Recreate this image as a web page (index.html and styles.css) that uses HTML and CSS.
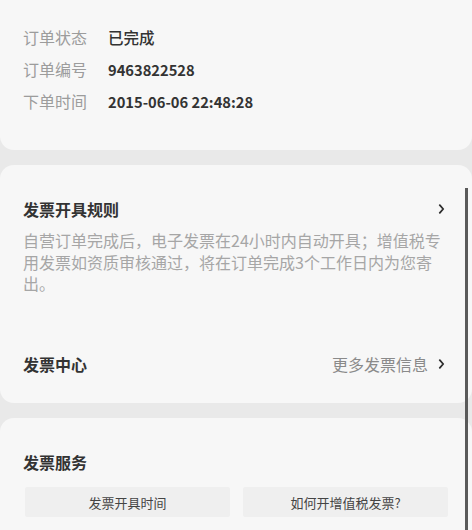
FILE: index.html
```html
<!DOCTYPE html>
<html lang="zh-CN">
<head>
<meta charset="utf-8">
<link rel="stylesheet" href="styles.css">
</head>
<body>
<div class="page">
  <section class="card card-first">
    <div class="info-row"><span class="label">订单状态</span><span class="value value-status">已完成</span></div>
    <div class="info-row"><span class="label">订单编号</span><span class="value">9463822528</span></div>
    <div class="info-row"><span class="label">下单时间</span><span class="value">2015-06-06 22:48:28</span></div>
  </section>

  <section class="card card-rules">
    <div class="title-row">
      <span class="title">发票开具规则</span>
      <svg class="chev" width="7" height="10" viewBox="0 0 7 10"><path d="M1.8 1.2 L5.2 5 L1.8 8.8" fill="none" stroke="#2e2e2e" stroke-width="1.8" stroke-linecap="round" stroke-linejoin="round"/></svg>
    </div>
    <p class="desc">自营订单完成后，电子发票在24小时内自动开具；增值税专用发票如资质审核通过，将在订单完成3个工作日内为您寄出。</p>
    <div class="title-row center-row">
      <span class="title title-normal">发票中心</span>
      <span class="more">更多发票信息
        <svg class="chev" width="7" height="10" viewBox="0 0 7 10"><path d="M1.8 1.2 L5.2 5 L1.8 8.8" fill="none" stroke="#2e2e2e" stroke-width="1.8" stroke-linecap="round" stroke-linejoin="round"/></svg>
      </span>
    </div>
  </section>

  <section class="card card-service">
    <div class="title-row">
      <span class="title title-normal">发票服务</span>
    </div>
    <div class="btns">
      <div class="btn">发票开具时间</div>
      <div class="btn">如何开增值税发票?</div>
    </div>
  </section>
</div>
<div class="scrollbar"></div>
</body>
</html>
```

FILE: styles.css
```css
html, body {
  margin: 0;
  padding: 0;
  background: #e9e9e9;
  font-family: "Noto Sans CJK SC", "Noto Sans", sans-serif;
  color: #333;
  overflow: hidden;
}
.page {
  display: flex;
  flex-direction: column;
  gap: 15px;
  height: 530px;
}
.card {
  background: #f7f7f7;
  border-radius: 14px;
  padding: 0 27px 0 23px;
  flex-shrink: 0;
}
.card-first {
  border-radius: 0 0 14px 14px;
  padding-top: 21px;
  padding-bottom: 33px;
  height: 96px;
}
.info-row {
  display: flex;
  align-items: center;
  height: 32px;
  font-size: 16px;
}
.label {
  width: 85px;
  color: #9c9c9c;
}
.value {
  color: #333;
  font-weight: 700;
  font-size: 14.7px;
}
.value-status {
  font-weight: 500;
  font-size: 15.5px;
}
.card-rules {
  padding-top: 32px;
  padding-bottom: 27px;
  height: 179px;
}
.title-row {
  display: flex;
  align-items: center;
  justify-content: space-between;
  height: 24px;
}
.title {
  font-size: 16px;
  font-weight: 700;
  color: #333;
}
.title-normal {
  font-weight: 600;
}
.chev {
  display: block;
}
.desc {
  margin: 9px 0 0 0;
  font-size: 16px;
  line-height: 21.5px;
  color: #a6a6a6;
}
.center-row {
  margin-top: 57px;
}
.more {
  display: flex;
  align-items: center;
  gap: 10px;
  font-size: 16px;
  color: #8a8a8a;
}
.card-service {
  padding: 32px 24px 20px 23px;
  border-radius: 14px 14px 0 0;
  flex-grow: 1;
}
.btns {
  display: grid;
  grid-template-columns: 1fr 1fr;
  gap: 13px;
  margin-top: 13px;
  padding-left: 2px;
}
.btn {
  height: 30px;
  background: #efefef;
  border-radius: 2px;
  display: flex;
  align-items: center;
  justify-content: center;
  font-size: 13px;
  color: #444;
}
.scrollbar {
  position: absolute;
  left: 465px;
  top: 188px;
  width: 3px;
  height: 342px;
  background: #5a5a5a;
}
```
